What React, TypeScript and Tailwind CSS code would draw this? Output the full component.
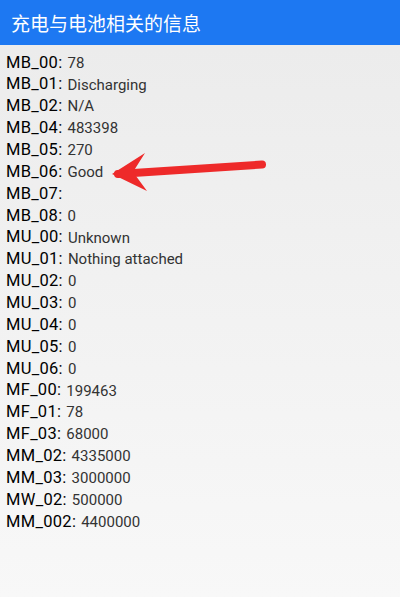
import React from 'react';

const rows: [string, string][] = [
  ['MB_00', '78'],
  ['MB_01', 'Discharging'],
  ['MB_02', 'N/A'],
  ['MB_04', '483398'],
  ['MB_05', '270'],
  ['MB_06', 'Good'],
  ['MB_07', ''],
  ['MB_08', '0'],
  ['MU_00', 'Unknown'],
  ['MU_01', 'Nothing attached'],
  ['MU_02', '0'],
  ['MU_03', '0'],
  ['MU_04', '0'],
  ['MU_05', '0'],
  ['MU_06', '0'],
  ['MF_00', '199463'],
  ['MF_01', '78'],
  ['MF_03', '68000'],
  ['MM_02', '4335000'],
  ['MM_03', '3000000'],
  ['MW_02', '500000'],
  ['MM_002', '4400000'],
];

export default function App() {
  return (
    <div
      className="relative w-[400px] h-[597px] flex flex-col overflow-hidden bg-gradient-to-b from-[#ebebeb] to-[#f8f8f8]"
      style={{ fontFamily: 'Roboto, "Noto Sans CJK SC", sans-serif' }}
    >
      {/* Title bar */}
      <div className="h-[45px] bg-[#1d78f2] flex items-center px-[11px] shrink-0">
        <span
          className="text-white text-[19px] leading-none"
          style={{ fontFamily: '"Noto Sans CJK SC", sans-serif' }}
        >
          充电与电池相关的信息
        </span>
      </div>

      {/* Info list */}
      <div className="pt-[7px] px-[6px] flex flex-col">
        {rows.map(([k, v]) => (
          <div key={k} className="h-[21.86px] flex items-center whitespace-nowrap">
            <span className="text-[16.5px] text-black tracking-[0.3px]">{k}:</span>
            {v && <span className="ml-[5px] text-[15px] text-[#333]">{v}</span>}
          </div>
        ))}
      </div>

      {/* Annotation arrow */}
      <svg className="absolute left-0 top-0" width="400" height="597" viewBox="0 0 400 597">
        <path d="M118 174 L262 164.5" stroke="#ee2a2a" strokeWidth="8" strokeLinecap="round" fill="none" />
        <path d="M112 174 L145 153 L133 172 L147 191 Z" fill="#ee2a2a" />
      </svg>
    </div>
  );
}
